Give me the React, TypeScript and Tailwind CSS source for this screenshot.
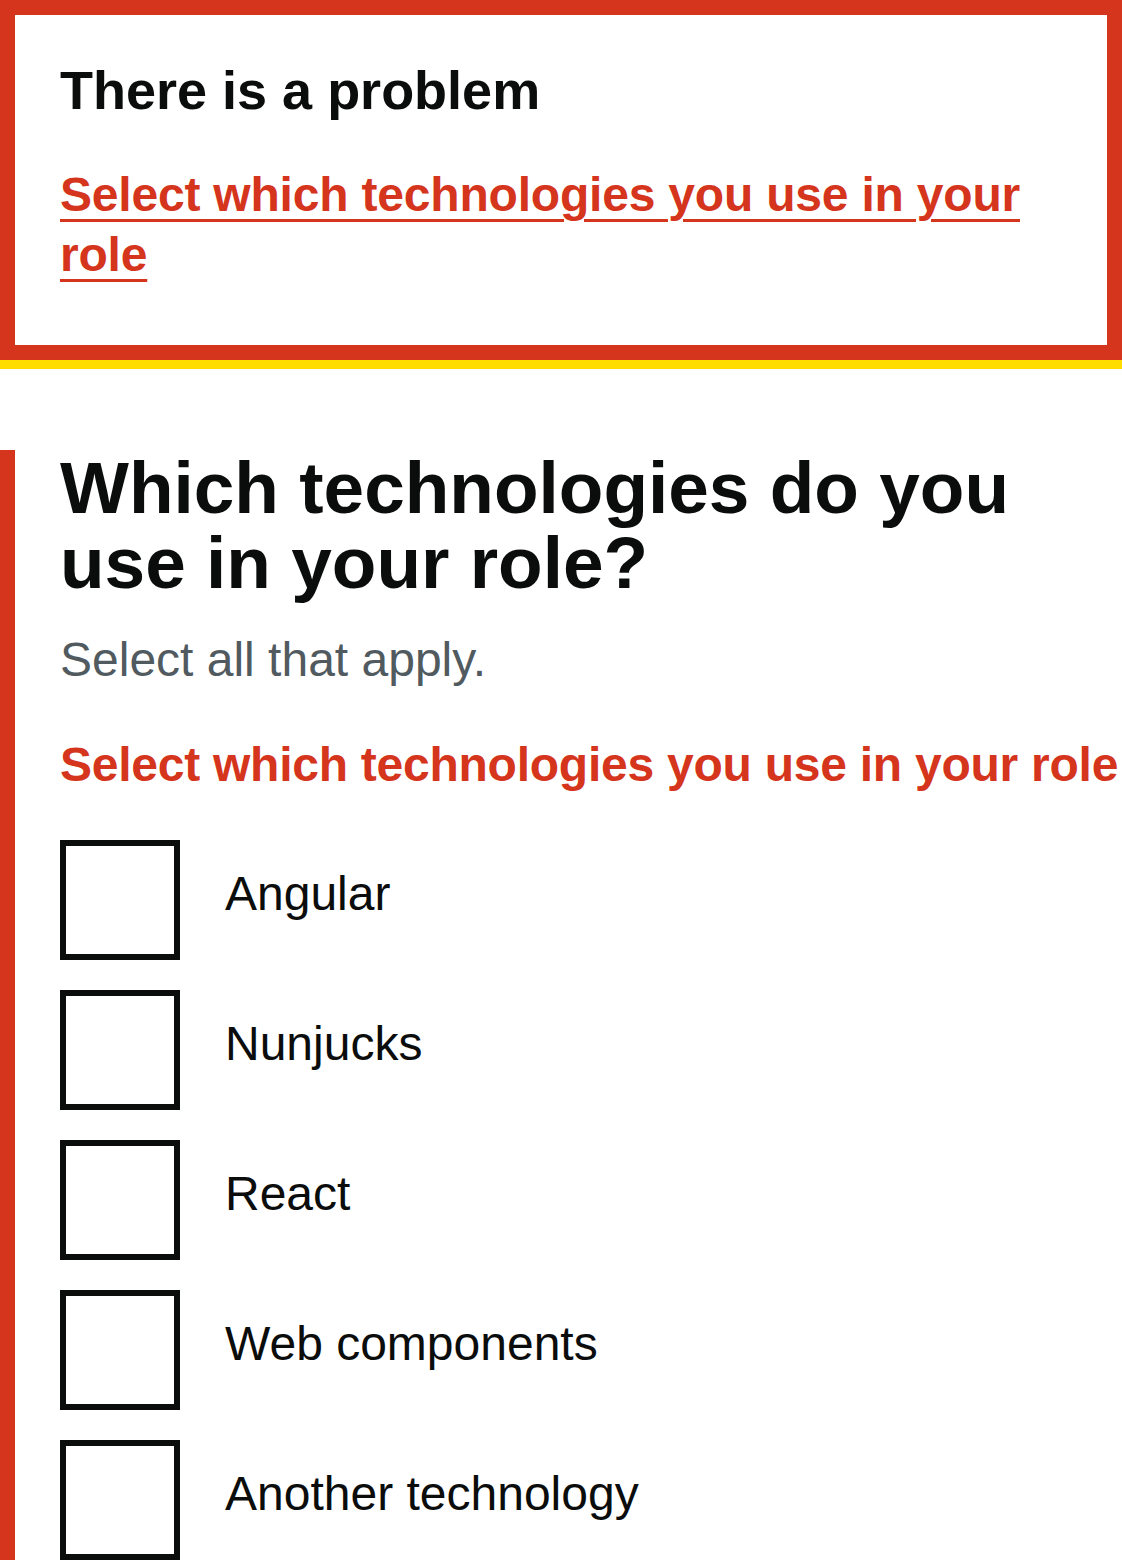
import React from "react";

const font = { fontFamily: '"Liberation Sans", Arial, sans-serif' };

const items = ["Angular", "Nunjucks", "React", "Web components", "Another technology"];

export default function App() {
  return (
    <div className="bg-white text-[#0b0c0c] w-[1122px]" style={font}>
      <div className="border-b-[9px] border-[#ffdd00]">
        <div className="border-[15px] border-[#d4351c] px-[45px] pt-[45px] pb-[60px]">
          <h2 className="text-[54px] leading-[60px] font-bold mb-[45px]">There is a problem</h2>
          <ul>
            <li>
              <a
                href="#"
                className="text-[48px] leading-[60px] font-bold tracking-[-0.2px] text-[#d4351c] underline decoration-[3px] underline-offset-[0.1578em]"
              >
                Select which technologies you use in your role
              </a>
            </li>
          </ul>
        </div>
      </div>
      <div className="mt-[81px] border-l-[15px] border-[#d4351c] pl-[45px]">
        <fieldset>
          <legend className="text-[73px] leading-[75px] font-bold mb-[30px]">
            Which technologies do you use in your role?
          </legend>
          <div className="text-[48px] leading-[60px] text-[#505a5f] mb-[45px]">Select all that apply.</div>
          <p className="text-[48px] leading-[60px] font-bold tracking-[-0.25px] text-[#d4351c] mb-[45px] whitespace-nowrap">
            Select which technologies you use in your role
          </p>
          <div className="flex flex-col gap-[30px]">
            {items.map((it) => (
              <div key={it} className="flex items-start">
                <div className="w-[120px] h-[120px] border-[6px] border-[#0b0c0c] bg-white shrink-0" />
                <label className="pl-[45px] pt-[24px] pb-[15px] text-[48px] leading-[60px]">{it}</label>
              </div>
            ))}
          </div>
        </fieldset>
      </div>
    </div>
  );
}
